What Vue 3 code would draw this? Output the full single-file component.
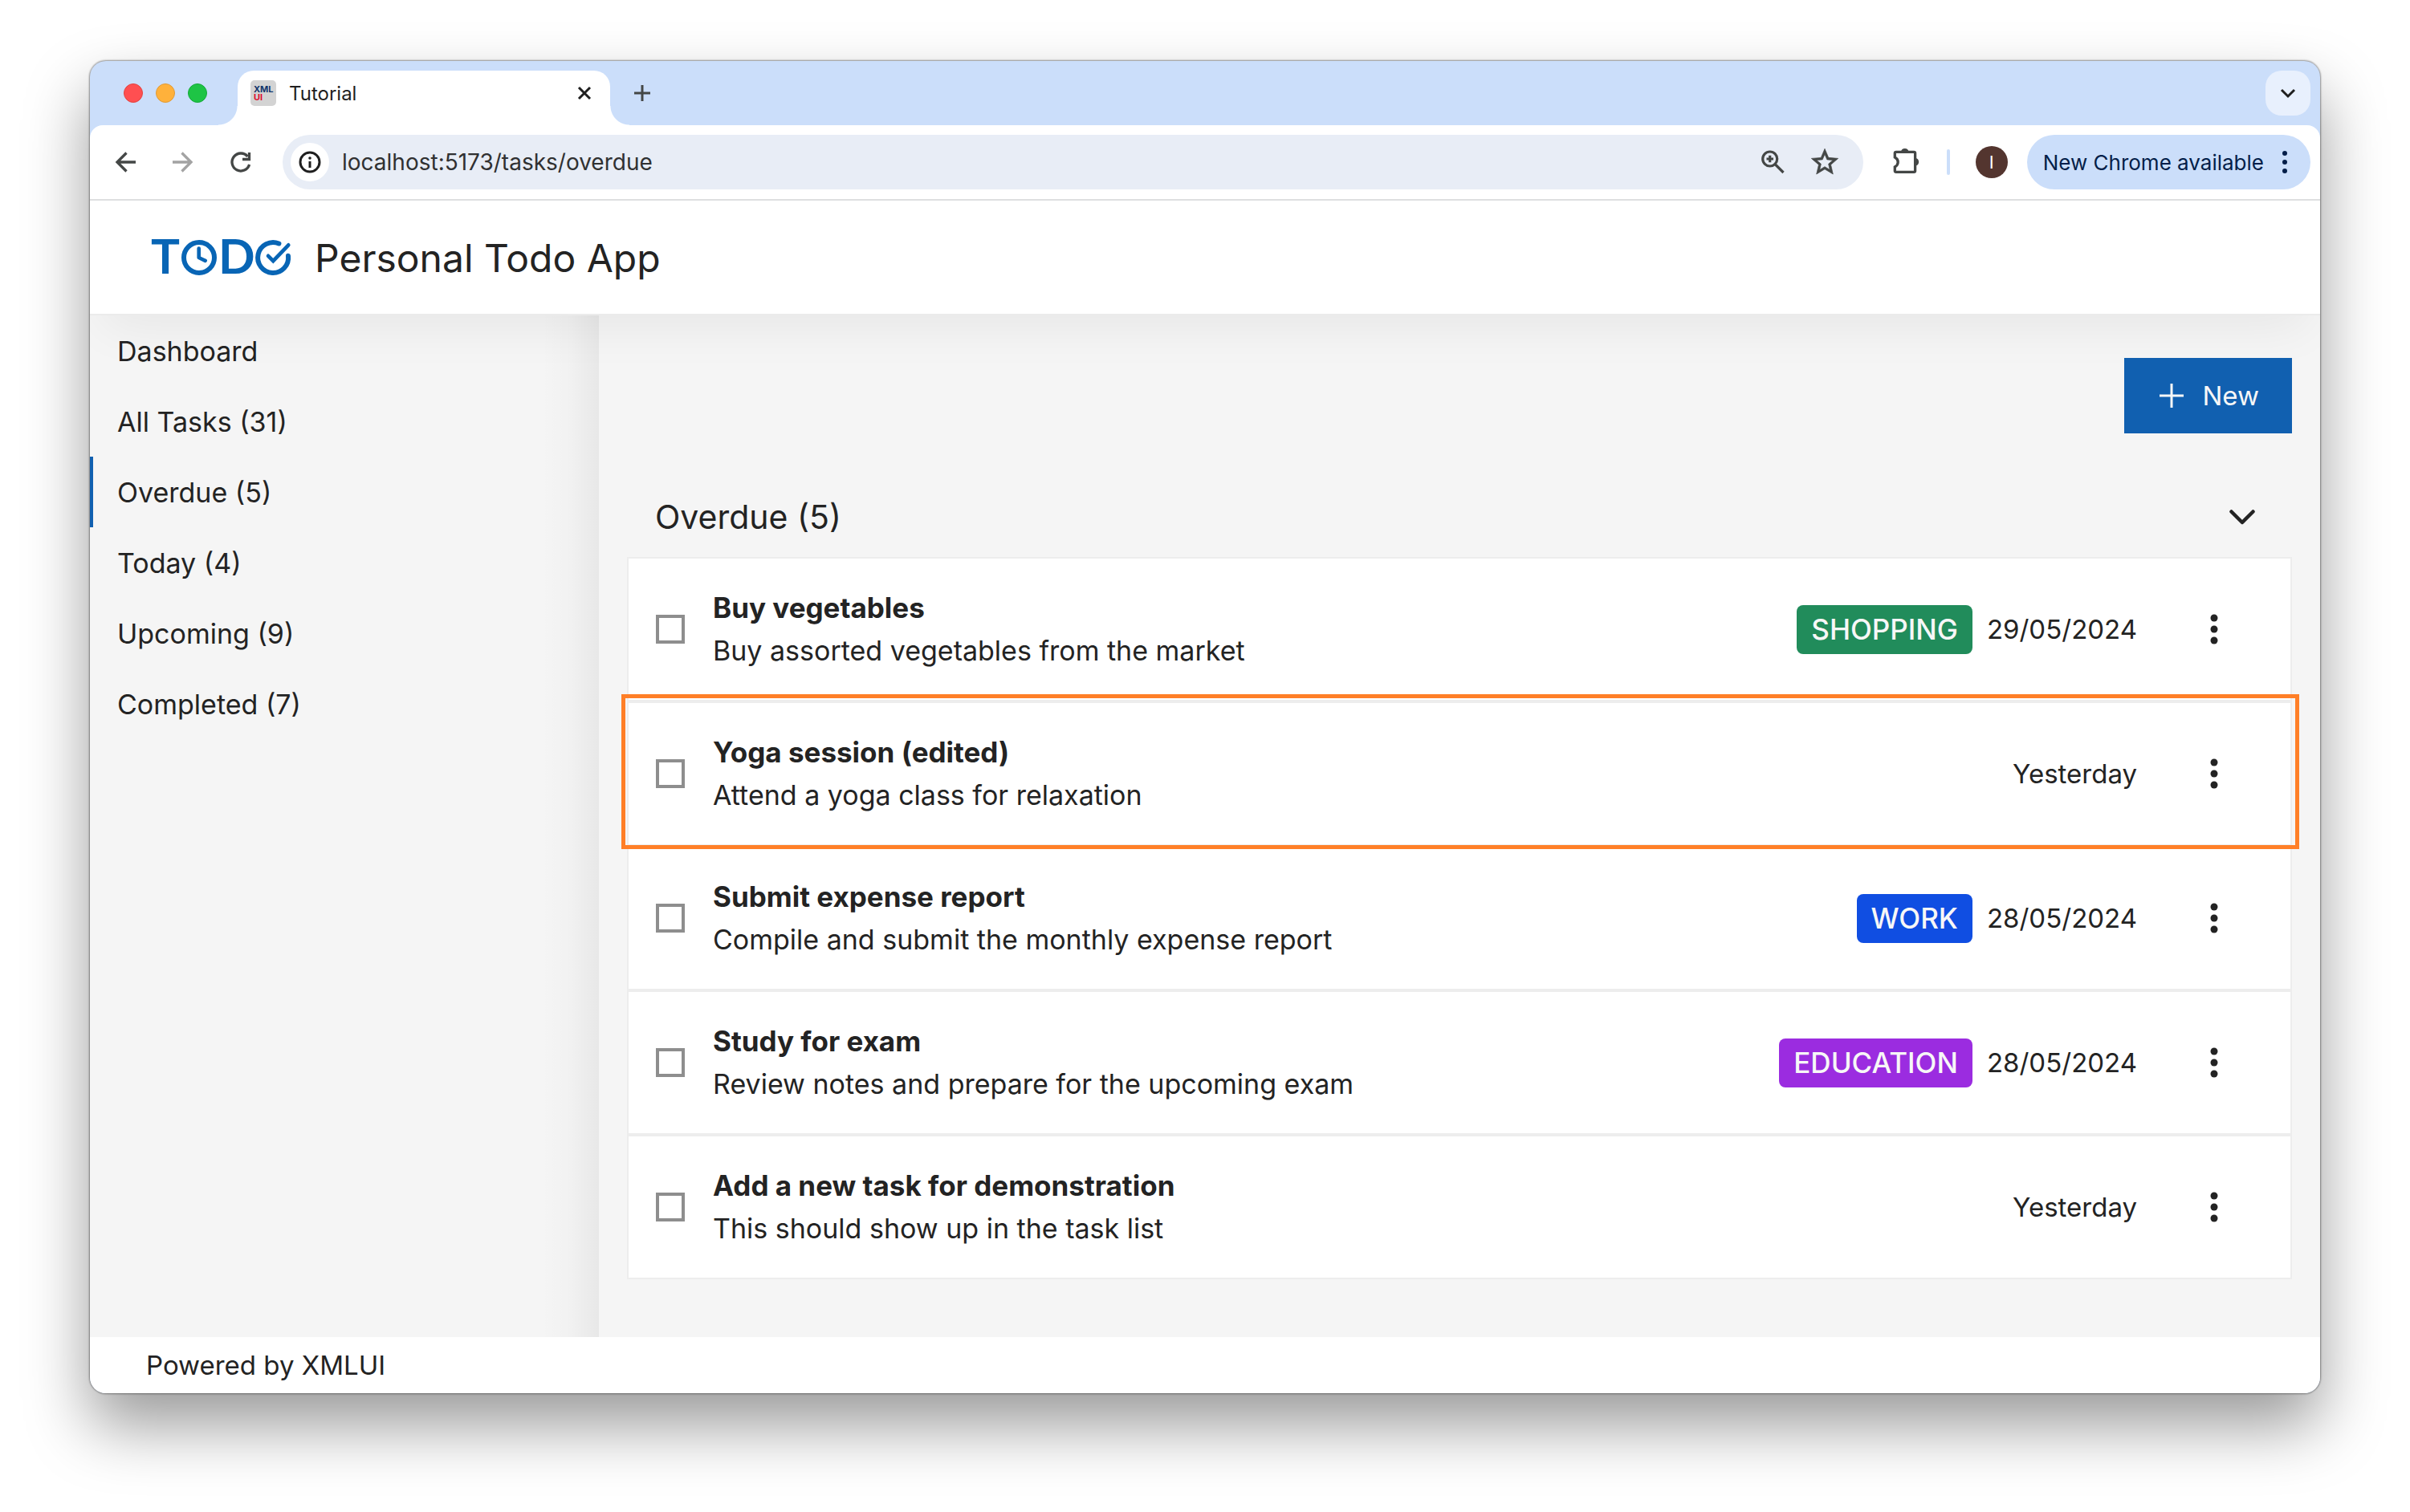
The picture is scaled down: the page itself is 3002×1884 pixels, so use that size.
<script setup>
import { ref } from 'vue'

const url = ref('localhost:5173/tasks/overdue')

const navItems = [
  { label: 'Dashboard', href: '#/' },
  { label: 'All Tasks (31)', href: '#/tasks' },
  { label: 'Overdue (5)', href: '#/tasks/overdue', active: true },
  { label: 'Today (4)', href: '#/tasks/today' },
  { label: 'Upcoming (9)', href: '#/tasks/upcoming' },
  { label: 'Completed (7)', href: '#/tasks/completed' },
]

const tasks = ref([
  { id: 1, title: 'Buy vegetables', description: 'Buy assorted vegetables from the market', tag: 'SHOPPING', due: '29/05/2024', done: false },
  { id: 2, title: 'Yoga session (edited)', description: 'Attend a yoga class for relaxation', due: 'Yesterday', done: false, highlighted: true },
  { id: 3, title: 'Submit expense report', description: 'Compile and submit the monthly expense report', tag: 'WORK', due: '28/05/2024', done: false },
  { id: 4, title: 'Study for exam', description: 'Review notes and prepare for the upcoming exam', tag: 'EDUCATION', due: '28/05/2024', done: false },
  { id: 5, title: 'Add a new task for demonstration', description: 'This should show up in the task list', due: 'Yesterday', done: false },
])
</script>

<template>
  <div class="desktop">
    <div class="window">
      <div class="tab-strip">
        <div class="lights">
          <button class="light red" aria-label="Close window"></button>
          <button class="light yellow" aria-label="Minimise window"></button>
          <button class="light green" aria-label="Zoom window"></button>
        </div>
        <div class="tab">
          <svg class="favicon" viewBox="0 0 32 32" aria-hidden="true">
            <rect width="32" height="32" rx="5" fill="#d3d3d3" />
            <text x="4" y="15" fill="#12356b">XML</text>
            <text x="4" y="25" fill="#dc0a2d">UI</text>
          </svg>
          <span class="tab-title">Tutorial</span>
          <button class="tab-close" aria-label="Close tab">
            <svg viewBox="0 0 20 20" width="20" height="20"><path d="M3 3 17 17M17 3 3 17" stroke="#1f1f1f" stroke-width="3" /></svg>
          </button>
        </div>
        <button class="new-tab" aria-label="New tab">
          <svg viewBox="0 0 24 24" width="24" height="24"><path d="M12 2V22M2 12H22" stroke="#444746" stroke-width="3" /></svg>
        </button>
        <button class="tab-search" aria-label="Search tabs">
          <svg viewBox="0 0 24 24" width="24" height="24"><path d="M4 8 12 16 20 8" fill="none" stroke="#1f1f1f" stroke-width="3" /></svg>
        </button>
      </div>

      <div class="toolbar">
        <div class="history">
          <button class="icon-button" aria-label="Back">
            <svg viewBox="0 0 40 40"><path d="M33 20H11M21.500 8.500 10 20 21.500 31.500" fill="none" stroke="#444746" stroke-width="3.300" /></svg>
          </button>
          <button class="icon-button" aria-label="Forward">
            <svg viewBox="0 0 40 40"><path d="M7 20H29M18.500 8.500 30 20 18.500 31.500" fill="none" stroke="#a3a3a3" stroke-width="3.300" /></svg>
          </button>
          <button class="icon-button" aria-label="Reload">
            <svg viewBox="0 0 40 40">
              <path d="M30.600 23A11 11 0 1 1 28.500 13" fill="none" stroke="#444746" stroke-width="3.300" />
              <path d="M30.500 8V16.500H22" fill="none" stroke="#444746" stroke-width="3.300" />
            </svg>
          </button>
        </div>
        <form class="omnibox" @submit.prevent>
          <button type="button" class="site-info" aria-label="View site information">
            <svg viewBox="0 0 28 28" width="28" height="28">
              <circle cx="14" cy="14" r="12" fill="none" stroke="#1f1f1f" stroke-width="3" />
              <path d="M14 13V21" stroke="#1f1f1f" stroke-width="3" />
              <circle cx="14" cy="9" r="1.800" fill="#1f1f1f" />
            </svg>
          </button>
          <input v-model="url" class="url" type="text" aria-label="Address" />
          <button type="button" class="small-icon" aria-label="Zoom level">
            <svg viewBox="0 0 40 40">
              <circle cx="15.700" cy="16" r="9" fill="none" stroke="#444746" stroke-width="3.200" />
              <path d="M22 22.500 32.500 33M11.500 16H20M15.700 11.700V20.300" stroke="#444746" stroke-width="3.200" />
            </svg>
          </button>
          <button type="button" class="small-icon" aria-label="Bookmark this page">
            <svg viewBox="0 0 24 24"><path fill="#444746" stroke="#444746" stroke-width=".4" d="M22 9.240l-7.190-.62L12 2 9.190 8.630 2 9.240l5.460 4.730L5.820 21 12 17.270 18.180 21l-1.630-7.030L22 9.240zM12 15.400l-3.760 2.270 1-4.280-3.320-2.880 4.380-.38L12 6.100l1.710 4.040 4.380.38-3.320 2.880 1 4.280L12 15.400z" /></svg>
          </button>
        </form>
        <button class="small-icon extensions" aria-label="Extensions">
          <svg viewBox="0 0 40 40">
            <path d="M5.300 14V8.800Q5.300 7.300 6.800 7.300H29Q30.600 7.300 30.600 8.800V31Q30.600 32.400 29 32.400H6.800Q5.300 32.400 5.300 31V26Q9.200 24 9.200 20T5.300 14Z" fill="none" stroke="#444746" stroke-width="3.300" />
            <path d="M13 7A4.800 4.800 0 0 1 22.500 7ZM31 15A4.800 4.800 0 0 1 31 24.500Z" fill="#444746" />
          </svg>
        </button>
        <span class="divider"></span>
        <button class="avatar" aria-label="Profile">I</button>
        <button class="update">
          <span>New Chrome available</span>
          <svg viewBox="0 0 8 28" width="8" height="28" fill="#041e49"><circle cx="4" cy="3" r="3" /><circle cx="4" cy="14" r="3" /><circle cx="4" cy="25" r="3" /></svg>
        </button>
      </div>

      <div class="app">
        <header class="app-header">
          <svg class="logo" viewBox="0 -20 180 90" role="img" aria-label="TODO">
            <text x="2" y="45">T</text>
            <text x="86" y="45">D</text>
            <g fill="none" stroke="#0865b5" stroke-width="6">
              <circle cx="62" cy="25" r="19" />
              <path d="M61.700 13.600V25L69.700 28.800" stroke-width="4.600" stroke-linecap="round" stroke-linejoin="round" />
              <path d="M161.400 7.500A19 19 0 1 0 173 22.800" stroke-linecap="round" />
              <path d="M148 22.800 154.300 29.100 173.300 9.300" stroke-width="4.600" stroke-linecap="round" />
            </g>
          </svg>
          <h1>Personal Todo App</h1>
        </header>

        <div class="app-body">
          <nav class="sidebar">
            <a v-for="item in navItems" :key="item.label" :href="item.href" class="nav-item" :class="{ active: item.active }">{{ item.label }}</a>
          </nav>

          <main class="content">
            <div class="actions">
              <button class="new-task">
                <svg viewBox="0 0 36 36" width="36" height="36"><path d="M18 3V33M3 18H33" stroke="#f7f7f7" stroke-width="3" /></svg>
                <span>New</span>
              </button>
            </div>

            <div class="group-header">
              <h2>Overdue (5)</h2>
              <button class="collapse" aria-label="Collapse group">
                <svg viewBox="0 0 36 36" width="36" height="36"><path d="M4.500 11.500 18 25 31.500 11.500" fill="none" stroke="#232323" stroke-width="4.500" stroke-linecap="round" stroke-linejoin="round" /></svg>
              </button>
            </div>

            <ul class="tasks">
              <li v-for="task in tasks" :key="task.id" class="task" :class="{ highlighted: task.highlighted }">
                <input :id="`task-${task.id}`" v-model="task.done" type="checkbox" class="check" />
                <label class="texts" :for="`task-${task.id}`">
                  <strong>{{ task.title }}</strong>
                  <span>{{ task.description }}</span>
                </label>
                <span v-if="task.tag" class="tag" :class="task.tag.toLowerCase()">{{ task.tag }}</span>
                <span class="due">{{ task.due }}</span>
                <button class="more" :aria-label="`Actions for ${task.title}`">
                  <svg viewBox="0 0 10 38" width="10" height="38" fill="#232323"><circle cx="5" cy="5" r="4.500" /><circle cx="5" cy="19" r="4.500" /><circle cx="5" cy="33" r="4.500" /></svg>
                </button>
              </li>
            </ul>
          </main>
        </div>

        <footer class="app-footer">Powered by XMLUI</footer>
      </div>
    </div>
  </div>
</template>

<style>
body {
  margin: 0;
  background: #fff;
}
</style>

<style scoped>
* {
  box-sizing: border-box;
}

button {
  display: flex;
  align-items: center;
  justify-content: center;
  flex: none;
  margin: 0;
  padding: 0;
  border: 0;
  background: none;
  font: inherit;
  color: inherit;
}

.desktop {
  display: flex;
  flex-direction: column;
  min-height: 100vh;
  padding: 76px 112px 148px;
  font-family: Inter, "Liberation Sans", sans-serif;
  font-size: 33px;
  color: #232323;
}

.window {
  display: flex;
  flex-direction: column;
  flex: 1;
  border-radius: 20px;
  background: #cbdefa;
  box-shadow: 0 0 2px 1px rgba(0, 0, 0, 0.4), 0 40px 80px rgba(0, 0, 0, 0.4);
  overflow: hidden;
}

/* Tab strip */
.tab-strip {
  display: flex;
  align-items: center;
  height: 80px;
  padding: 0 12px 0 42px;
}

.lights {
  display: flex;
  gap: 16px;
}

.light {
  width: 24px;
  height: 24px;
  border-radius: 50%;
}

.red {
  background: #ff4f51;
  border: 1px solid #e2433f;
}

.yellow {
  background: #ffb13b;
  border: 1px solid #e09a35;
}

.green {
  background: #1ec445;
  border: 1px solid #15a838;
}

.tab {
  position: relative;
  display: flex;
  align-items: center;
  align-self: flex-end;
  width: 464px;
  height: 68px;
  margin-left: 38px;
  padding: 0 22px 12px 16px;
  border-radius: 20px 20px 0 0;
  background: #fff;
}

.tab::before,
.tab::after {
  content: "";
  position: absolute;
  bottom: 0;
  width: 24px;
  height: 24px;
}

.tab::before {
  right: 100%;
  background: radial-gradient(circle at 0 0, transparent 23px, #fff 24px);
}

.tab::after {
  left: 100%;
  background: radial-gradient(circle at 100% 0, transparent 23px, #fff 24px);
}

.favicon {
  width: 32px;
  height: 32px;
  font-size: 11px;
  font-weight: 700;
}

.tab-title {
  flex: 1;
  margin-left: 16px;
  font-size: 24px;
  color: #1f1f1f;
}

.new-tab {
  margin-left: 28px;
}

.tab-search {
  width: 56px;
  height: 56px;
  margin-left: auto;
  border-radius: 20px;
  background: #e8f0fd;
}

/* Toolbar */
.toolbar {
  display: flex;
  align-items: center;
  height: 94px;
  padding: 0 12px 0 20px;
  border-bottom: 2px solid #dedfe0;
  border-radius: 16px 16px 0 0;
  background: #fff;
}

.history {
  display: flex;
  gap: 24px;
}

.icon-button {
  width: 48px;
  height: 48px;
}

.icon-button svg,
.small-icon svg {
  width: 40px;
  height: 40px;
}

.omnibox {
  display: flex;
  align-items: center;
  flex: 1;
  gap: 24px;
  height: 68px;
  margin-left: 28px;
  padding: 0 28px 0 10px;
  border-radius: 34px;
  background: #e8edf6;
}

.site-info {
  width: 48px;
  height: 48px;
  border-radius: 50%;
  background: #fff;
}

.url {
  flex: 1;
  min-width: 0;
  margin-left: -8px;
  padding: 0;
  border: 0;
  outline: 0;
  background: none;
  font-family: inherit;
  font-size: 28px;
  color: #303132;
}

.small-icon {
  width: 40px;
  height: 40px;
}

.extensions {
  margin-left: 34px;
}

.divider {
  width: 4px;
  height: 32px;
  margin: 0 32px 0 30px;
  border-radius: 2px;
  background: #cbdefa;
}

.avatar {
  width: 40px;
  height: 40px;
  border-radius: 50%;
  background: #53352f;
  font-size: 22px;
  color: #fff;
}

.update {
  gap: 22px;
  height: 68px;
  margin-left: 24px;
  padding: 0 28px 0 20px;
  border-radius: 34px;
  background: #cbdefa;
  font-size: 26px;
  color: #041e49;
}

/* Application */
.app {
  display: flex;
  flex-direction: column;
  flex: 1;
}

.app-header {
  position: relative;
  z-index: 1;
  display: flex;
  align-items: center;
  gap: 26px;
  height: 143px;
  padding: 0 74px;
  border-bottom: 2px solid #ebebeb;
  background: #fff;
  box-shadow: 0 32px 60px -16px rgba(0, 0, 0, 0.06);
}

.logo {
  width: 180px;
  height: 90px;
  font-family: Lato, sans-serif;
  font-size: 60px;
  font-weight: 700;
  fill: #0865b5;
}

h1,
h2 {
  margin: 0;
  font-weight: 400;
}

h1 {
  padding-top: 2px;
  font-size: 48px;
}

h2 {
  font-size: 41px;
}

.app-body {
  display: flex;
  flex: 1;
  background: #f5f5f5;
}

.sidebar {
  flex: none;
  width: 634px;
  background: linear-gradient(to left, rgba(0, 0, 0, 0.055), rgba(0, 0, 0, 0.015) 36px, transparent 72px);
}

.nav-item {
  display: flex;
  align-items: center;
  height: 88px;
  padding-left: 30px;
  border-left: 4px solid transparent;
  color: inherit;
  font-size: 34px;
  text-decoration: none;
}

.nav-item.active {
  border-left-color: #1160b0;
}

.content {
  flex: 1;
  min-width: 0;
  padding: 53px 35px 72px;
}

.actions {
  display: flex;
  justify-content: flex-end;
}

.new-task {
  position: relative;
  z-index: 2;
  gap: 20px;
  height: 94px;
  padding: 0 41px;
  background: #1160b0;
  color: #f7f7f7;
}

.group-header {
  display: flex;
  align-items: center;
  justify-content: space-between;
  height: 104px;
  margin-top: 50px;
  padding: 4px 44px 0 35px;
}

.tasks {
  margin: 0;
  padding: 0;
  list-style: none;
}

.task {
  position: relative;
  display: flex;
  align-items: center;
  height: 180px;
  padding: 0 35px 0 34px;
  border: 2px solid #ededed;
  background: #fff;
}

.highlighted::after {
  content: "";
  position: absolute;
  inset: -11px -11px -6px -9px;
  z-index: 1;
  border: 5px solid #ff7f27;
  pointer-events: none;
}

.check {
  flex: none;
  width: 36px;
  height: 36px;
  margin: 0 35px 0 0;
  border: 4px solid #8e8e8e;
  background: #fff;
  appearance: none;
}

.check:checked {
  border-color: #1160b0;
  background: #1160b0;
}

.texts {
  display: flex;
  flex-direction: column;
  flex: 1;
  font-size: 34px;
  line-height: 53px;
}

.texts strong {
  font-size: 35px;
  font-weight: 700;
}

.tag {
  margin-right: 18px;
  padding: 0 18px;
  border-radius: 8px;
  font-size: 35px;
  font-weight: 500;
  line-height: 61px;
  color: #f7f7f7;
}

.shopping {
  background: #218c5b;
}

.work {
  background: #104ee2;
}

.education {
  background: #9b2ce0;
}

.more {
  width: 120px;
  height: 94px;
  margin-left: 36px;
}

.app-footer {
  display: flex;
  align-items: center;
  height: 70px;
  padding: 0 70px;
  background: #fff;
}
</style>
